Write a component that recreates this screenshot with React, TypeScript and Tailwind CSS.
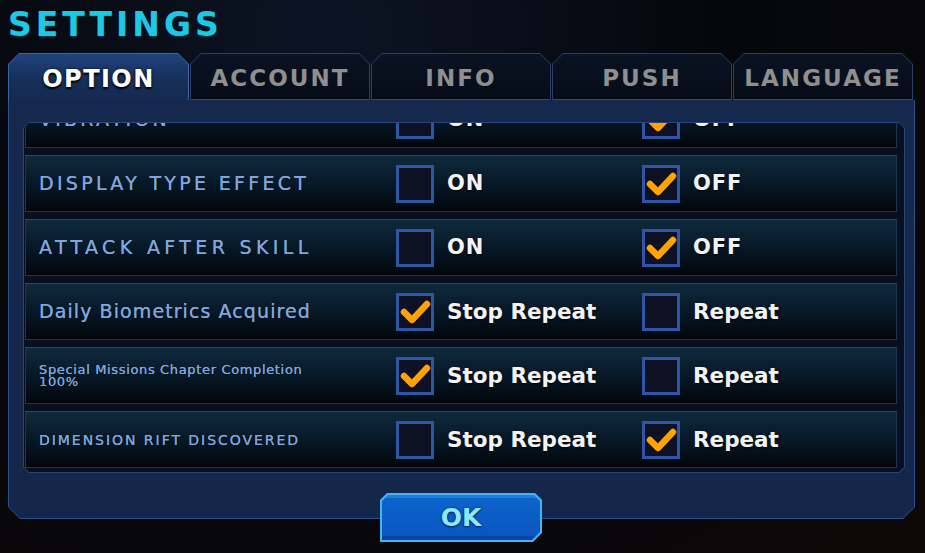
import React from "react";

type Opt = { text: string; checked: boolean };
type Row = { label: string; cls: string; a: Opt; b: Opt };

const rows: Row[] = [
  {
    label: "VIBRATION",
    cls: "text-[19px] tracking-[0.17em] leading-none",
    a: { text: "ON", checked: false },
    b: { text: "OFF", checked: true }
  },
  {
    label: "DISPLAY TYPE EFFECT",
    cls: "text-[19px] tracking-[0.174em] leading-none",
    a: { text: "ON", checked: false },
    b: { text: "OFF", checked: true }
  },
  {
    label: "ATTACK AFTER SKILL",
    cls: "text-[19px] tracking-[0.23em] leading-none",
    a: { text: "ON", checked: false },
    b: { text: "OFF", checked: true }
  },
  {
    label: "Daily Biometrics Acquired",
    cls: "text-[19px] tracking-[0.057em] leading-none",
    a: { text: "Stop Repeat", checked: true },
    b: { text: "Repeat", checked: false }
  },
  {
    label: "Special Missions Chapter Completion 100%",
    cls: "w-[270px] text-[13px] tracking-[0.05em] leading-[12px]",
    a: { text: "Stop Repeat", checked: true },
    b: { text: "Repeat", checked: false }
  },
  {
    label: "DIMENSION RIFT DISCOVERED",
    cls: "text-[14px] tracking-[0.14em] leading-none",
    a: { text: "Stop Repeat", checked: false },
    b: { text: "Repeat", checked: true }
  }
];

const tabs = ["OPTION", "ACCOUNT", "INFO", "PUSH", "LANGUAGE"];

function CheckBox({ checked }: { checked: boolean }) {
  return (
    <div className="h-[38px] w-[38px] shrink-0 border-[3px] border-[#2f56a6] bg-[#0e1124]">
      {checked ? (
        <svg viewBox="0 0 32 32" className="h-full w-full">
          <polyline
            points="5,16 13,24 28,8"
            fill="none"
            stroke="#ffa305"
            strokeWidth="6.5"
            strokeLinecap="round"
            strokeLinejoin="round"
          />
        </svg>
      ) : null}
    </div>
  );
}

function Option({ opt, wide }: { opt: Opt; wide: boolean }) {
  return (
    <div className="flex items-center gap-[13px]">
      <CheckBox checked={opt.checked} />
      <span
        className={
          wide
            ? "text-[21.5px] font-bold leading-none text-[#f3f3f3] [text-shadow:0_1px_2px_#000]"
            : "text-[21px] font-bold leading-none tracking-[0.04em] text-[#f3f3f3] [text-shadow:0_1px_2px_#000]"
        }
      >
        {opt.text}
      </span>
    </div>
  );
}

function SettingRow({ row }: { row: Row }) {
  const wide = row.a.text === "Stop Repeat";
  return (
    <div className="grid h-[57px] shrink-0 grid-cols-[357px_246px_1fr] items-center border border-[#1d3452] border-t-[#27466e] bg-[linear-gradient(to_bottom,#0e2a3d,#061624_55%,#02060b)] pl-[13px]">
      <div className={`text-[#80a6dc] [text-shadow:0_0_0.4px_#80a6dc] ${row.cls}`}>{row.label}</div>
      <Option opt={row.a} wide={wide} />
      <Option opt={row.b} wide={wide} />
    </div>
  );
}

export default function App() {
  return (
    <div className="h-[553px] w-[925px] overflow-hidden bg-[radial-gradient(ellipse_at_35%_5%,#0c1424_0%,#05070c_45%,#0c0807_100%)] font-['DejaVu_Sans',sans-serif]">
      {/* title */}
      <div className="h-[53px] pl-[8px] pt-[8px]">
        <h1 className="text-[33px] font-bold leading-none tracking-[4px] text-[#1cc8e4] [text-shadow:0_1px_1px_#04303c]">
          SETTINGS
        </h1>
      </div>

      <div className="ml-[8px] w-[907px]">
        {/* tabs */}
        <div className="flex h-[47px] gap-[1px]">
          {tabs.map((t, i) =>
            i === 0 ? (
              <div
                key={t}
                className="w-[181px] bg-[#3a64a8] px-[1px] pt-[1px] [clip-path:polygon(11px_0,calc(100%_-_11px)_0,100%_11px,100%_100%,0_100%,0_11px)]"
              >
                <div className="flex h-full items-center justify-center bg-[linear-gradient(to_bottom,#1f427c,#172e58_60%,#152a50)] pt-[3px] text-[24px] font-bold leading-none tracking-[0.06em] text-white [clip-path:polygon(10px_0,calc(100%_-_10px)_0,100%_10px,100%_100%,0_100%,0_10px)] [text-shadow:0_0_2px_#000,0_2px_2px_#000]">
                  {t}
                </div>
              </div>
            ) : (
              <div
                key={t}
                className="w-[180px] bg-[#293f66] p-[1px] pb-0 [clip-path:polygon(11px_0,calc(100%_-_11px)_0,100%_11px,100%_100%,0_100%,0_11px)]"
              >
                <div className="flex h-full items-center justify-center border-b border-[#2d4a7c] bg-[linear-gradient(to_bottom,#0a1324,#060b17)] pt-[3px] text-[23px] font-bold leading-none tracking-[0.09em] text-[#8f8f8f] [clip-path:polygon(10px_0,calc(100%_-_10px)_0,100%_10px,100%_100%,0_100%,0_10px)]">
                  {t}
                </div>
              </div>
            )
          )}
        </div>

        {/* panel body */}
        <div className="h-[419px] bg-[#2f5088] px-[1px] pb-[1px] [clip-path:polygon(0_0,100%_0,100%_calc(100%_-_12px),calc(100%_-_12px)_100%,12px_100%,0_calc(100%_-_12px))]">
          <div className="h-full bg-[linear-gradient(to_bottom,#15294e,#14264a)] pl-[14px] pr-[9px] pt-[22px] [clip-path:polygon(0_0,100%_0,100%_calc(100%_-_11px),calc(100%_-_11px)_100%,11px_100%,0_calc(100%_-_11px))]">
            <div className="h-[351px] bg-[#2a4473] p-[1px] [clip-path:polygon(6px_0,calc(100%_-_6px)_0,100%_6px,100%_calc(100%_-_6px),calc(100%_-_6px)_100%,6px_100%,0_calc(100%_-_6px),0_6px)]">
              <div className="h-full overflow-hidden bg-[#080f1e] pl-[1px] pr-[7px] [clip-path:polygon(5px_0,calc(100%_-_5px)_0,100%_5px,100%_calc(100%_-_5px),calc(100%_-_5px)_100%,5px_100%,0_calc(100%_-_5px),0_5px)]">
                <div className="-mt-[32px] flex flex-col gap-[7px]">
                  {rows.map((r) => (
                    <SettingRow key={r.label} row={r} />
                  ))}
                </div>
              </div>
            </div>
          </div>
        </div>
      </div>

      {/* OK button */}
      <div className="relative -mt-[26px] ml-[380px] h-[49px] w-[162px] bg-[#45b4f0] p-[2px] [clip-path:polygon(7px_0,calc(100%_-_7px)_0,100%_7px,100%_calc(100%_-_9px),calc(100%_-_9px)_100%,0_100%,0_7px)]">
        <div className="flex h-full items-center justify-center border-t-[3px] border-b-[4px] border-t-[#1f7ede] border-b-[#0845a4] bg-[linear-gradient(to_bottom,#0d63cc,#0a56bf)] text-[25px] font-bold leading-none text-[#8fe6ff] [clip-path:polygon(6px_0,calc(100%_-_6px)_0,100%_6px,100%_calc(100%_-_8px),calc(100%_-_8px)_100%,0_100%,0_6px)] [text-shadow:0_0_2px_#04264f,0_1px_2px_#04264f]">
          OK
        </div>
      </div>
    </div>
  );
}
